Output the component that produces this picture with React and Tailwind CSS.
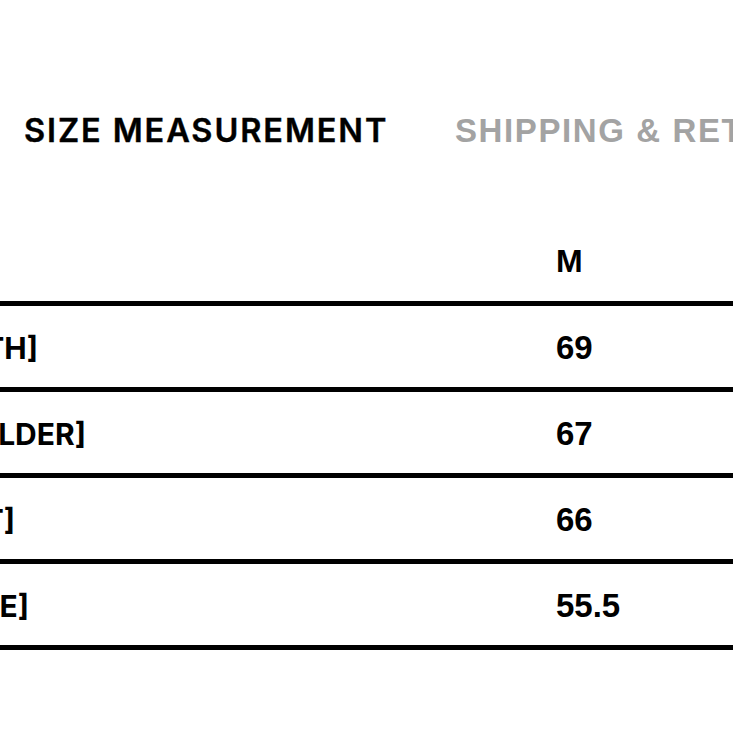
import React from "react";

const rows = [
  { label: "[LENGTH]", end: "w-[38px]", value: "69" },
  { label: "[SHOULDER]", end: "w-[86px]", value: "67" },
  { label: "[CHEST]", end: "w-[15px]", value: "66" },
  { label: "[SLEEVE]", end: "w-[29px]", value: "55.5" },
];

export default function App() {
  return (
    <div className="w-[733px] h-[733px] bg-white overflow-hidden">
      <div className="flex items-center pt-[109px] h-[152px] whitespace-nowrap overflow-hidden">
        <div className="pl-[24px] w-[455px] shrink-0 text-[32.5px] leading-[40px] font-semibold tracking-[1.9px] text-black [font-family:Inter,'Noto_Sans',sans-serif] [-webkit-text-stroke:0.4px_black]">
          SIZE MEASUREMENT
        </div>
        <div className="shrink-0 text-[33px] leading-[40px] font-bold tracking-[1.6px] text-[#a3a3a3] [font-family:'Liberation_Sans',Arial,sans-serif]">
          SHIPPING &amp; RETURNS
        </div>
      </div>
      <div className="mt-[84px] h-[65px] flex pt-[5px]">
        <div className="pl-[556px] text-[32px] leading-[40px] font-bold text-black [font-family:'Liberation_Sans',Arial,sans-serif]">
          M
        </div>
      </div>
      <div className="border-b-[5px] border-black">
        {rows.map((r) => (
          <div key={r.label} className="h-[86px] border-t-[5px] border-black flex items-center">
            <div className={`${r.end} shrink-0 overflow-hidden flex justify-end whitespace-nowrap`}>
              <span className="text-[30px] leading-[40px] font-bold text-black [font-family:Inter,'Noto_Sans',sans-serif] translate-y-[1px]">
                {r.label}
              </span>
            </div>
            <div className="flex-1" />
            <div className="w-[177px] shrink-0 text-[33px] leading-[40px] font-bold text-black [font-family:'Liberation_Sans',Arial,sans-serif] translate-y-[1px]">
              {r.value}
            </div>
          </div>
        ))}
      </div>
    </div>
  );
}
